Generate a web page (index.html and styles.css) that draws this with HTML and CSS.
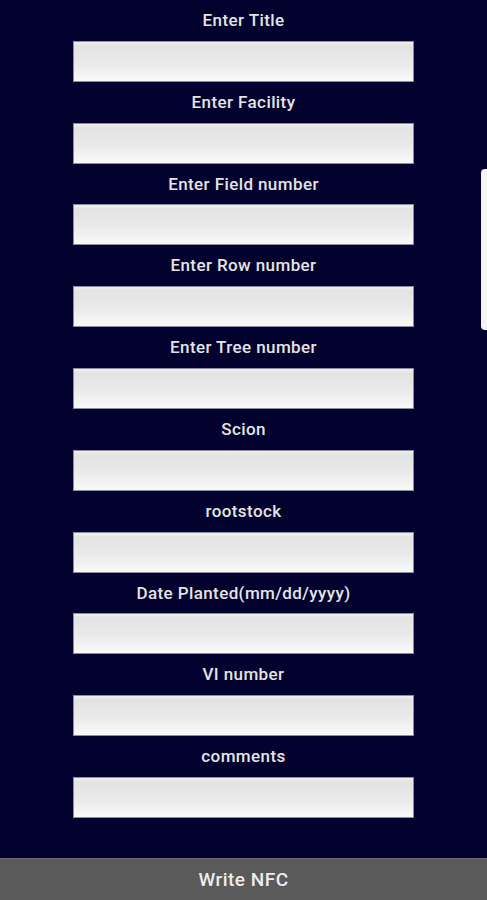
FILE: index.html
```html
<!DOCTYPE html>
<html lang="en">
<head>
    <meta charset="UTF-8">
    <title>Write NFC</title>
    <link rel="stylesheet" href="styles.css">
</head>
<body>
<form class="tag-form" id="tagForm">
    <label for="title">Enter Title</label>
    <input type="text" id="title" name="title">

    <label for="facility">Enter Facility</label>
    <input type="text" id="facility" name="facility">

    <label for="field">Enter Field number</label>
    <input type="text" id="field" name="field">

    <label for="row">Enter Row number</label>
    <input type="text" id="row" name="row">

    <label for="tree">Enter Tree number</label>
    <input type="text" id="tree" name="tree">

    <label for="scion">Scion</label>
    <input type="text" id="scion" name="scion">

    <label for="rootstock">rootstock</label>
    <input type="text" id="rootstock" name="rootstock">

    <label for="planted">Date Planted(mm/dd/yyyy)</label>
    <input type="text" id="planted" name="planted">

    <label for="vi">VI number</label>
    <input type="text" id="vi" name="vi">

    <label for="comments">comments</label>
    <input type="text" id="comments" name="comments">
</form>

<button class="write-button" type="submit" form="tagForm">Write NFC</button>

<div class="edge-tab"></div>
</body>
</html>
```

FILE: styles.css
```css
html, body {
    height: 100%;
}

body {
    margin: 0;
    background-color: #03012e;
    font-family: Roboto, "Liberation Sans", sans-serif;
    display: flex;
    flex-direction: column;
    overflow: hidden;
}

.tag-form {
    display: flex;
    flex-direction: column;
    align-items: center;
}

label {
    display: block;
    height: 40.8px;
    line-height: 40.8px;
    font-size: 17px;
    font-weight: 500;
    letter-spacing: 0.4px;
    color: #e4e4e4;
    text-align: center;
}

input {
    box-sizing: border-box;
    width: 341px;
    height: 41px;
    margin: 0;
    padding: 0 8px;
    border: 1px solid #8c8ca0;
    border-radius: 0;
    background: linear-gradient(#f0f0f0 0%, #e3e3e3 10%, #e9e9e9 50%, #f9f9f9 100%);
    font-size: 16px;
    outline: none;
}

.write-button {
    margin-top: auto;
    height: 42px;
    width: 100%;
    border: none;
    border-top: 1px solid #6b6b7a;
    background-color: #5a5a5a;
    color: #ececec;
    font-family: Roboto, "Liberation Sans", sans-serif;
    font-size: 19px;
    font-weight: 500;
    letter-spacing: 0.5px;
    cursor: pointer;
}

.edge-tab {
    position: absolute;
    top: 169px;
    right: 0;
    width: 6px;
    height: 161px;
    background-color: #f4f4f4;
    border-radius: 4px 0 0 4px;
}
```
